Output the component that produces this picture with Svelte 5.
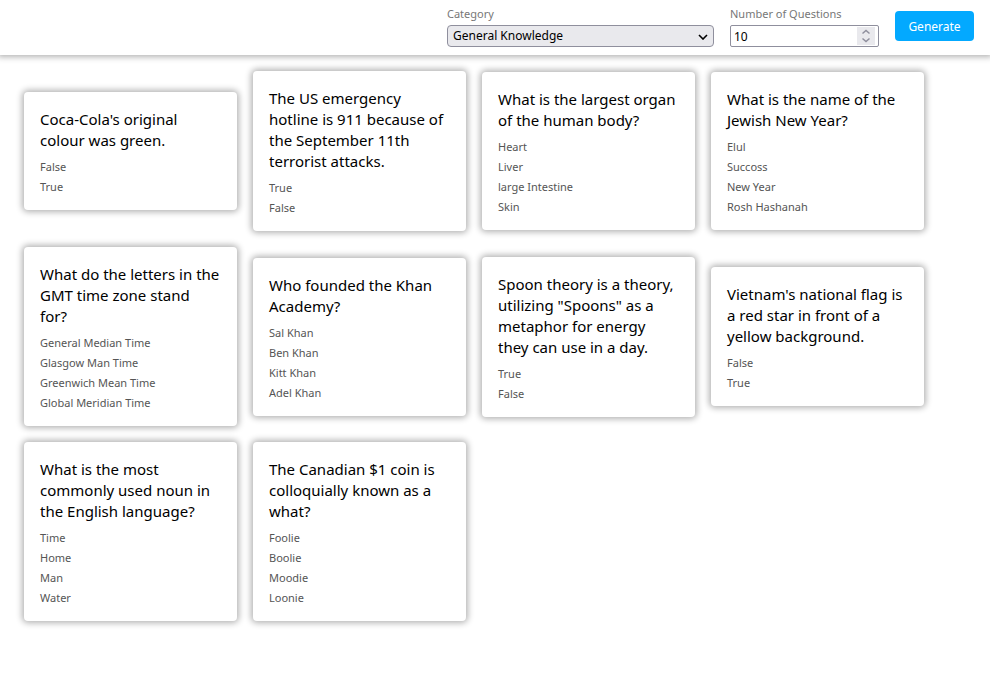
<script>
  let category = $state('General Knowledge');
  let amount = $state(10);

  const categories = ['General Knowledge', 'Books', 'Film', 'Music', 'History'];

  const questions = [
    { text: "Coca-Cola's original colour was green.", answers: ['False', 'True'] },
    { text: 'The US emergency hotline is 911 because of the September 11th terrorist attacks.', answers: ['True', 'False'] },
    { text: 'What is the largest organ of the human body?', answers: ['Heart', 'Liver', 'large Intestine', 'Skin'] },
    { text: 'What is the name of the Jewish New Year?', answers: ['Elul', 'Succoss', 'New Year', 'Rosh Hashanah'] },
    { text: 'What do the letters in the GMT time zone stand for?', answers: ['General Median Time', 'Glasgow Man Time', 'Greenwich Mean Time', 'Global Meridian Time'] },
    { text: 'Who founded the Khan Academy?', answers: ['Sal Khan', 'Ben Khan', 'Kitt Khan', 'Adel Khan'] },
    { text: 'Spoon theory is a theory, utilizing "Spoons" as a metaphor for energy they can use in a day.', answers: ['True', 'False'] },
    { text: "Vietnam's national flag is a red star in front of a yellow background.", answers: ['False', 'True'] },
    { text: 'What is the most commonly used noun in the English language?', answers: ['Time', 'Home', 'Man', 'Water'] },
    { text: 'The Canadian $1 coin is colloquially known as a what?', answers: ['Foolie', 'Boolie', 'Moodie', 'Loonie'] }
  ];
</script>

<form class="header" onsubmit={(e) => e.preventDefault()}>
  <div class="field category">
    <label for="category">Category</label>
    <div class="control">
      <select id="category" bind:value={category}>
        {#each categories as name}
          <option>{name}</option>
        {/each}
      </select>
      <svg class="chevron" width="10" height="6" viewBox="0 0 10 6" aria-hidden="true">
        <path d="M1 1l4 4 4-4" fill="none" stroke="#000" stroke-width="1.6" />
      </svg>
    </div>
  </div>
  <div class="field amount">
    <label for="amount">Number of Questions</label>
    <div class="control">
      <input id="amount" type="number" min="1" bind:value={amount} />
      <svg class="spinner" width="18" height="18" viewBox="0 0 18 18" aria-hidden="true">
        <path d="M0 0h18v18H0z" fill="#e9e9ed" />
        <path d="M5.5 6.5L9 3.5l3.5 3M5.5 11.5l3.5 3 3.5-3" fill="none" stroke="#8f8f9d" stroke-width="1.5" />
      </svg>
    </div>
  </div>
  <button type="submit">Generate</button>
</form>

<main class="grid">
  {#each questions as question}
    <article class="card">
      <p class="question">{question.text}</p>
      <ul>
        {#each question.answers as answer}
          <li>{answer}</li>
        {/each}
      </ul>
    </article>
  {/each}
</main>

<style>
  :global(body) {
    margin: 0;
    background: #fff;
    font-family: 'Segoe UI', 'Noto Sans', 'Open Sans', sans-serif;
  }

  .header {
    display: flex;
    justify-content: flex-end;
    align-items: center;
    gap: 16px;
    padding: 5px 16px 8px;
    background: #fff;
    box-shadow: 0 0 6px 2px rgba(0, 0, 0, 0.3);
  }

  .field {
    display: flex;
    flex-direction: column;
    gap: 2px;
  }

  .category {
    width: 267px;
  }

  .amount {
    width: 149px;
  }

  label {
    color: #777;
    font-size: 11px;
    line-height: 18px;
  }

  .control {
    position: relative;
    display: flex;
  }

  select,
  input {
    appearance: none;
    box-sizing: border-box;
    width: 100%;
    height: 22px;
    margin: 0;
    border: 1px solid #8f8f9d;
    color: #000;
    font-family: inherit;
    font-size: 12px;
    line-height: 18px;
  }

  select {
    padding: 0 24px 0 5px;
    border-radius: 4px;
    background: #e9e9ed;
  }

  input {
    padding: 0 24px 0 3px;
    border-radius: 2px;
    background: #fff;
    appearance: textfield;
  }

  input::-webkit-inner-spin-button {
    appearance: none;
  }

  .chevron,
  .spinner {
    position: absolute;
    pointer-events: none;
  }

  .chevron {
    top: 9px;
    right: 6px;
  }

  .spinner {
    top: 2px;
    right: 4px;
  }

  button {
    width: 79px;
    height: 30px;
    margin: 0;
    padding: 0;
    border: 0;
    border-radius: 4px;
    background: #03a9ff;
    color: #fff;
    font-family: inherit;
    font-size: 12px;
  }

  .grid {
    display: grid;
    grid-template-columns: repeat(auto-fill, 213px);
    align-items: center;
    gap: 16px;
    padding: 16px 24px;
  }

  .card {
    padding: 17px 17px 13px 16px;
    border-radius: 4px;
    background: #fff;
    box-shadow: 0 0 6px 2px rgba(0, 0, 0, 0.3);
  }

  .question {
    margin: 0 0 6px;
    color: #000;
    font-size: 15px;
    line-height: 21px;
  }

  ul {
    margin: 0;
    padding: 0;
    list-style: none;
  }

  li {
    color: #555;
    font-size: 11px;
    line-height: 20px;
  }
</style>
